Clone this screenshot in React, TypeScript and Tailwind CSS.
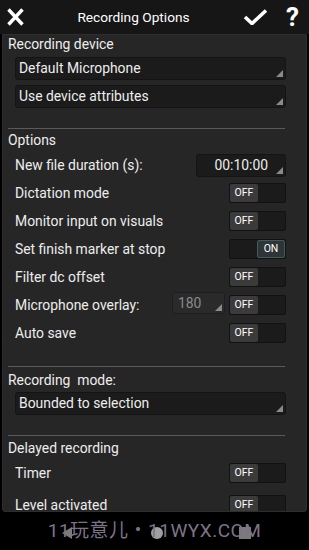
import React from "react";

const font = { fontFamily: "Roboto, 'Noto Sans CJK SC', sans-serif" };

function Corner() {
  return (
    <svg className="absolute right-[2px] bottom-[2px]" width="7" height="7" viewBox="0 0 7 7">
      <polygon points="7,0 7,7 0,7" fill="#8a8a8a" />
    </svg>
  );
}

function Select({ text }: { text: string }) {
  return (
    <div className="relative ml-[12px] mr-[20px] h-[23px] rounded-[3px] border border-[#141414] bg-[#1b1b1b] pl-[3px] text-[13.9px] leading-[21px] text-[#ededed]">
      {text}
      <Corner />
    </div>
  );
}

function Toggle({ on = false }: { on?: boolean }) {
  return (
    <div className="flex h-[20px] w-[57px] rounded-[2px] border border-[#121212] bg-[#1b1b1b]">
      {on ? (
        <>
          <div className="flex-1" />
          <div className="flex w-[28px] items-center justify-center rounded-[2px] border border-[#405a5d] bg-[#2f3536] text-[10.5px] text-white">
            ON
          </div>
        </>
      ) : (
        <>
          <div className="flex w-[28px] items-center justify-center rounded-[2px] bg-[#3b3b3b] text-[10.5px] text-white">
            OFF
          </div>
          <div className="flex-1" />
        </>
      )}
    </div>
  );
}

function Row({ label, children }: { label: string; children: React.ReactNode }) {
  return (
    <div className="flex h-[28px] items-center justify-between pl-[12px] pr-[20px] text-[13.9px] text-[#ededed]">
      <span>{label}</span>
      {children}
    </div>
  );
}

function Divider() {
  return <div className="ml-[5px] mr-[21px] h-px bg-[#5a5a5a]" />;
}

function Heading({ text }: { text: string }) {
  return <div className="h-[18px] whitespace-pre px-[5px] text-[13.9px] leading-[18px] text-[#ededed]">{text}</div>;
}

export default function App() {
  return (
    <div className="flex h-[550px] w-[309px] flex-col overflow-hidden bg-black" style={font}>
      <div className="flex h-[34px] shrink-0 items-center bg-[#161616] pl-[7px] pr-[11px] text-white">
        <svg width="17" height="18" viewBox="0 0 17 18">
          <path d="M1.5 1.5 L15.5 16.5 M15.5 1.5 L1.5 16.5" stroke="white" strokeWidth="3.4" />
        </svg>
        <div className="flex-1 text-center text-[13.7px]">Recording Options</div>
        <svg width="25" height="16" viewBox="0 0 25 16">
          <path d="M2 8 L9 14.5 L23 1.5" stroke="white" strokeWidth="3.6" fill="none" />
        </svg>
        <div className="ml-[18px] w-[12px] text-center text-[26px] font-bold leading-none">?</div>
      </div>
      <div className="mx-[2px] h-[478px] shrink-0 overflow-hidden rounded-b-[3px] border border-[#2e2e2e] bg-[#262626]">
        <Heading text="Recording device" />
        <div className="mt-[4px] flex flex-col gap-[5px]">
          <Select text="Default Microphone" />
          <Select text="Use device attributes" />
        </div>
        <div className="h-[20px]" />
        <Divider />
        <div className="mt-[2px]">
          <Heading text="Options" />
        </div>
        <div className="mt-[2px]">
          <Row label="New file duration (s):">
            <div className="relative h-[23px] w-[90px] rounded-[3px] border border-[#141414] bg-[#1b1b1b] pr-[17px] text-right text-[13.9px] leading-[21px]">
              00:10:00
              <Corner />
            </div>
          </Row>
          <Row label="Dictation mode">
            <Toggle />
          </Row>
          <Row label="Monitor input on visuals">
            <Toggle />
          </Row>
          <Row label="Set finish marker at stop">
            <Toggle on />
          </Row>
          <Row label="Filter dc offset">
            <Toggle />
          </Row>
          <Row label="Microphone overlay:">
            <div className="flex items-center gap-[4px]">
              <div className="relative -mt-[4px] h-[22px] w-[53px] rounded-[3px] border border-[#1e1e1e] bg-[#2a2a2a] pl-[5px] text-[13.9px] leading-[20px] text-[#8a8a8a]">
                180
                <Corner />
              </div>
              <Toggle />
            </div>
          </Row>
          <Row label="Auto save">
            <Toggle />
          </Row>
        </div>
        <div className="h-[19px]" />
        <Divider />
        <div className="mt-[4px]">
          <Heading text="Recording  mode:" />
        </div>
        <div className="mt-[3px]">
          <Select text="Bounded to selection" />
        </div>
        <div className="h-[20px]" />
        <Divider />
        <div className="mt-[3px]">
          <Heading text="Delayed recording" />
        </div>
        <div className="mt-[2px]">
          <Row label="Timer">
            <Toggle />
          </Row>
          <div className="h-[4px]" />
          <Row label="Level activated">
            <Toggle />
          </Row>
        </div>
      </div>
      <div className="relative flex flex-1 items-center justify-center">
        <div className="absolute inset-0 flex items-center justify-between pl-[60px] pr-[58px] pt-[4px]">
          <svg width="14" height="14" viewBox="0 0 14 14">
            <polygon points="12,1 12,13 2,7" fill="#7b7b7b" />
          </svg>
          <div className="h-[12px] w-[12px] rounded-full bg-[#a0a0a0]" />
          <div className="h-[12px] w-[12px] bg-[#7b7b7b]" />
        </div>
        <div className="relative text-[19px] tracking-[0.5px] text-[#7d7388]">11玩意儿・11WYX.COM</div>
      </div>
    </div>
  );
}
